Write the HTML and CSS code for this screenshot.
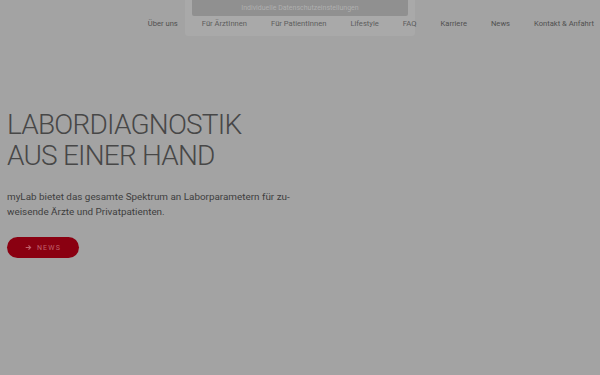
FILE: index.html
```html
<!DOCTYPE html>
<html lang="de">
  <head>
    <meta charset="UTF-8" />
    <meta name="viewport" content="width=device-width, initial-scale=1.0" />
    <title>myLab</title>
    <link rel="stylesheet" href="styles.css">
  </head>
  <body>
    <header class="header">
      <nav class="nav">
        <a href="#" class="nav__link">Über uns</a>
        <a href="#" class="nav__link">Für ÄrztInnen</a>
        <a href="#" class="nav__link">Für PatientInnen</a>
        <a href="#" class="nav__link">Lifestyle</a>
        <a href="#" class="nav__link">FAQ</a>
        <a href="#" class="nav__link">Karriere</a>
        <a href="#" class="nav__link">News</a>
        <a href="#" class="nav__link">Kontakt &amp; Anfahrt</a>
      </nav>
    </header>

    <main class="hero">
      <h1 class="hero__title">LABORDIAGNOSTIK<br />AUS EINER HAND</h1>
      <p class="hero__text">
        myLab bietet das gesamte Spektrum an Laborparametern für zu&shy;weisende
        Ärzte und Privatpatienten.
      </p>
      <a href="#" class="btn">
        <svg class="btn__icon" viewBox="0 0 10 10" width="7" height="7" aria-hidden="true">
          <path d="M1 5h7M5 2l3 3-3 3" fill="none" stroke="currentColor" stroke-width="1.6" />
        </svg>
        <span>NEWS</span>
      </a>
    </main>

    <!-- cookie dialog, mostly scrolled out of view -->
    <div class="consent">
      <button class="consent__btn">Individuelle Datenschutzeinstellungen</button>
    </div>
  </body>
</html>
```

FILE: styles.css
```css
:root {
  --page: #a3a3a3;
  --text: #464646;
  --brand: #8a0011;
}
*,
*::before,
*::after {
  box-sizing: border-box;
}
body {
  margin: 0;
  min-height: 100vh;
  font-family: Roboto, "Noto Sans", sans-serif;
  color: var(--text);
  background: var(--page);
}

/* Navigation */
.header {
  display: flex;
  justify-content: flex-end;
  padding: 18px 6px 0 0;
}
.nav {
  display: flex;
  gap: 24px;
}
.nav__link {
  font-size: 7.6px;
  line-height: 11px;
  color: #505050;
  text-decoration: none;
}

/* Hero */
.hero {
  padding: 80px 0 0 7px;
}
.hero__title {
  margin: 0;
  font-size: 28px;
  font-weight: 300;
  line-height: 31px;
  letter-spacing: -0.8px;
  color: #474747;
}
.hero__text {
  width: 292px;
  margin: 18px 0 0;
  font-size: 9.9px;
  line-height: 15px;
  color: #3e3e3e;
}
.btn {
  display: inline-flex;
  align-items: center;
  justify-content: center;
  gap: 5px;
  width: 72px;
  height: 21px;
  margin-top: 18px;
  border-radius: 11px;
  font-size: 7px;
  letter-spacing: 1.2px;
  color: #c0606c;
  background: var(--brand);
  text-decoration: none;
}
.btn__icon {
  display: block;
}

/* Consent dialog */
.consent {
  position: absolute;
  top: 0;
  left: 185px;
  width: 230px;
  height: 36px;
  padding: 0 7px;
  background: rgba(255, 255, 255, 0.07);
  border-radius: 0 0 3px 3px;
}
.consent__btn {
  display: block;
  width: 100%;
  height: 16px;
  border: 0;
  border-radius: 0 0 2px 2px;
  font-family: inherit;
  font-size: 7px;
  color: #afafaf;
  background: #909090;
}
```
